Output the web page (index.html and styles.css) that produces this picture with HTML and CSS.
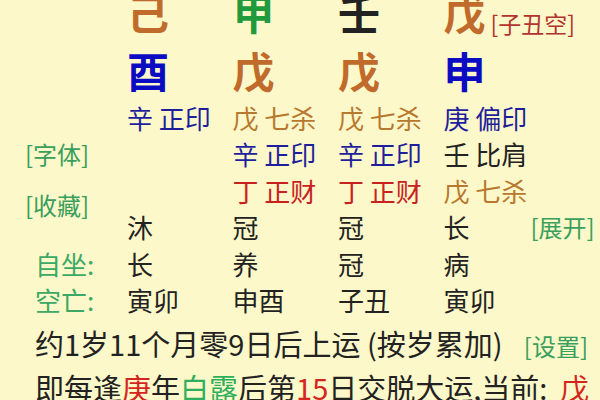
FILE: index.html
```html
<!DOCTYPE html>
<html lang="zh">
<head>
<meta charset="utf-8">
<link rel="stylesheet" href="styles.css">
</head>
<body>
<div class="page">
  <div class="chart">
    <div class="lab"></div>
    <div class="cell big brown">己</div>
    <div class="cell big green">甲</div>
    <div class="cell big black">壬</div>
    <div class="cell big brown">戊<span class="kong">[子丑空]</span></div>
    <div class="side"></div>

    <div class="lab"></div>
    <div class="cell big blue">酉</div>
    <div class="cell big brown">戊</div>
    <div class="cell big brown">戊</div>
    <div class="cell big blue">申</div>
    <div class="side"></div>

    <div class="lab"></div>
    <div class="cell navy">辛 正印</div>
    <div class="cell tan">戊 七杀</div>
    <div class="cell tan">戊 七杀</div>
    <div class="cell navy">庚 偏印</div>
    <div class="side"></div>

    <div class="lab link">[字体]</div>
    <div class="cell"></div>
    <div class="cell navy">辛 正印</div>
    <div class="cell navy">辛 正印</div>
    <div class="cell black">壬 比肩</div>
    <div class="side"></div>

    <div class="lab link lower">[收藏]</div>
    <div class="cell"></div>
    <div class="cell red">丁 正财</div>
    <div class="cell red">丁 正财</div>
    <div class="cell tan">戊 七杀</div>
    <div class="side"></div>

    <div class="lab"></div>
    <div class="cell black">沐</div>
    <div class="cell black">冠</div>
    <div class="cell black">冠</div>
    <div class="cell black">长</div>
    <div class="side link">[展开]</div>

    <div class="lab key">自坐:</div>
    <div class="cell black">长</div>
    <div class="cell black">养</div>
    <div class="cell black">冠</div>
    <div class="cell black">病</div>
    <div class="side"></div>

    <div class="lab key">空亡:</div>
    <div class="cell black">寅卯</div>
    <div class="cell black">申酉</div>
    <div class="cell black">子丑</div>
    <div class="cell black">寅卯</div>
    <div class="side"></div>
  </div>

  <div class="line first">
    <span class="black">约1岁11个月零9日后上运 (按岁累加)</span>
    <span class="link set">[设置]</span>
  </div>
  <div class="line second">
    <span class="black">即每逢<span class="hot">庚</span>年<span class="leaf">白露</span>后第<span class="hot">15</span>日交脱大运,当前: <span class="hot cur">戊</span></span>
  </div>
</div>
</body>
</html>
```

FILE: styles.css
```css
html, body {
  margin: 0;
  padding: 0;
  background: #fcf8c9;
}

body {
  width: 600px;
  height: 400px;
  overflow: hidden;
  font-family: "Noto Sans CJK SC", "Noto Sans", sans-serif;
  color: #222;
}

.page {
  display: flex;
  flex-direction: column;
}

.chart {
  margin-top: -16px;
  display: grid;
  grid-template-columns: 127px 105.5px 105.5px 105.5px 85px 1fr;
  grid-template-rows: 56px 59.5px repeat(6, 36.5px);
  font-size: 26px;
  line-height: 36.5px;
}

.cell, .lab, .side {
  white-space: nowrap;
}

.big {
  font-size: 42px;
  font-weight: 700;
  line-height: 56px;
}

.chart > .big:nth-child(n+7) {
  line-height: 59.5px;
}

.kong {
  font-size: 23px;
  font-weight: 400;
  color: #b3332e;
  margin-left: 5px;
  vertical-align: -3px;
}

.lab {
  padding-left: 25px;
}

.lab.key {
  padding-left: 35px;
  color: #3ba866;
}

.link {
  font-size: 24px;
  color: #3a9f5c;
}

.lab.lower {
  padding-top: 14px;
}

.side.link {
  padding-left: 2px;
}

.brown { color: #c06a2b; }
.green { color: #1f9a3c; }
.black { color: #222; }
.blue { color: #0b0bc4; }
.navy { color: #1f1f9c; }
.tan { color: #b8782f; }
.red { color: #c8221f; }

.line {
  display: flex;
  align-items: baseline;
  white-space: nowrap;
  font-size: 29px;
  line-height: 44px;
  padding-left: 35px;
}

.line.first {
  margin-top: 2px;
  justify-content: space-between;
  padding-right: 12px;
}

.line.second {
  margin-top: -3px;
}

.set {
  font-size: 24px;
}

.hot { color: #d42620; }
.leaf { color: #2fae5e; }

.cur {
  margin-left: 6px;
}
```
